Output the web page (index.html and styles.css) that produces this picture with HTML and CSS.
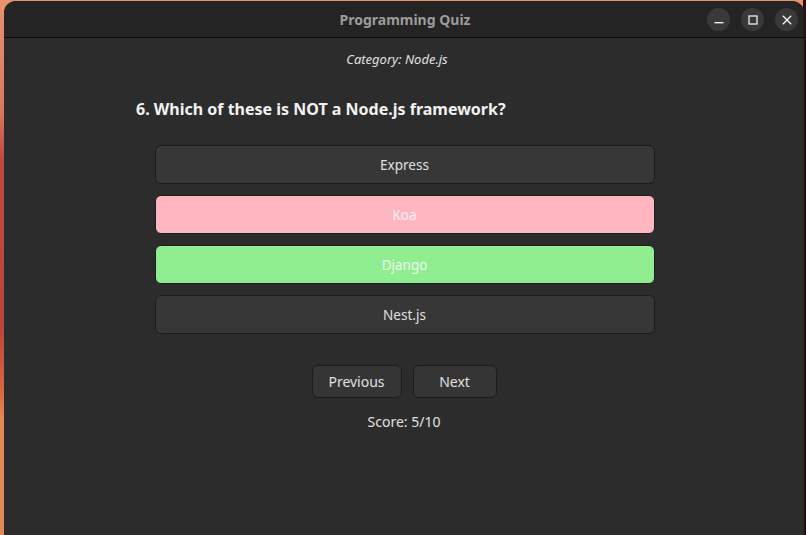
FILE: index.html
```html
<!DOCTYPE html>
<html>
<head>
<meta charset="utf-8">
<link rel="stylesheet" href="styles.css">
</head>
<body>
<div class="window">
  <header class="titlebar">
    <div class="title">Programming Quiz</div>
    <div class="controls">
      <span class="ctl"><svg width="12" height="12" viewBox="0 0 12 12"><rect x="1.5" y="8" width="9" height="1.4" fill="#f0f0f0"/></svg></span>
      <span class="ctl"><svg width="12" height="12" viewBox="0 0 12 12"><rect x="2" y="2" width="8" height="8" fill="none" stroke="#f0f0f0" stroke-width="1.3"/></svg></span>
      <span class="ctl"><svg width="12" height="12" viewBox="0 0 12 12"><path d="M1.8 1.8 L10.2 10.2 M10.2 1.8 L1.8 10.2" stroke="#f0f0f0" stroke-width="1.4" fill="none"/></svg></span>
    </div>
  </header>
  <main class="content">
    <div class="category">Category: Node.js</div>
    <div class="question">6. Which of these is NOT a Node.js framework?</div>
    <div class="options">
      <button class="opt">Express</button>
      <button class="opt wrong">Koa</button>
      <button class="opt right">Django</button>
      <button class="opt">Nest.js</button>
    </div>
    <div class="nav">
      <button class="navbtn prev">Previous</button>
      <button class="navbtn next">Next</button>
    </div>
    <div class="score">Score: 5/10</div>
  </main>
</div>
</body>
</html>
```
FILE: styles.css
```css
html, body {
  margin: 0;
  padding: 0;
  height: 100%;
  overflow: hidden;
}
body {
  background:
    linear-gradient(90deg, transparent 0, transparent 803px, #2a0d10 803px),
    linear-gradient(180deg, #e8936e 0px, #d9785f 110px, #c4473f 160px, #c0443c 330px, #d8673d 390px, #e48b50 420px, #e08a55 535px);
  font-family: "Noto Sans", "Open Sans", sans-serif;
  padding: 1px 2px 0 4px;
  box-sizing: border-box;
}
.window {
  width: 800px;
  height: 560px;
  background: #2c2c2c;
  border-radius: 12px 12px 0 0;
  overflow: hidden;
}
.titlebar {
  height: 36px;
  background: #242424;
  border-bottom: 1px solid #0c0c0c;
  display: flex;
  align-items: center;
  justify-content: center;
  position: relative;
}
.title {
  color: #9c9c9c;
  font-weight: 700;
  font-size: 14px;
  margin-left: 2px;
}
.controls {
  position: absolute;
  right: 6px;
  top: 7px;
  display: flex;
  gap: 11px;
}
.ctl {
  width: 23px;
  height: 23px;
  border-radius: 50%;
  background: #393939;
  display: flex;
  align-items: center;
  justify-content: center;
}
.content {
  display: flex;
  flex-direction: column;
  align-items: center;
  padding-top: 13px;
  color: #e2e2e2;
}
.category {
  font-style: italic;
  font-size: 13px;
  line-height: 17px;
  margin-right: 14px;
}
.question {
  align-self: flex-start;
  margin-left: 132px;
  margin-top: 31px;
  font-size: 16px;
  font-weight: 700;
  line-height: 20px;
  color: #f2f2f2;
}
.options {
  margin-top: 26px;
  width: 500px;
  margin-left: 1px;
  display: flex;
  flex-direction: column;
  gap: 11px;
}
.opt, .navbtn {
  font-family: "Noto Sans", "Open Sans", sans-serif;
  font-size: 13.5px;
  color: #e0e0e0;
  background: #373737;
  border: 1px solid #1c1c1c;
  border-radius: 6px;
  padding: 0;
  cursor: pointer;
}
.opt {
  height: 39px;
  width: 100%;
}
.opt.wrong {
  background: #ffb6c1;
  color: #f7f0f2;
}
.opt.right {
  background: #90ee90;
  color: #eef7ee;
}
.nav {
  margin-top: 31px;
  display: flex;
  gap: 11px;
}
.navbtn {
  height: 33px;
  background: #353535;
  font-size: 14px;
}
.prev { width: 90px; }
.next { width: 84px; }
.score {
  margin-top: 14px;
  font-size: 14px;
  line-height: 20px;
}
```
